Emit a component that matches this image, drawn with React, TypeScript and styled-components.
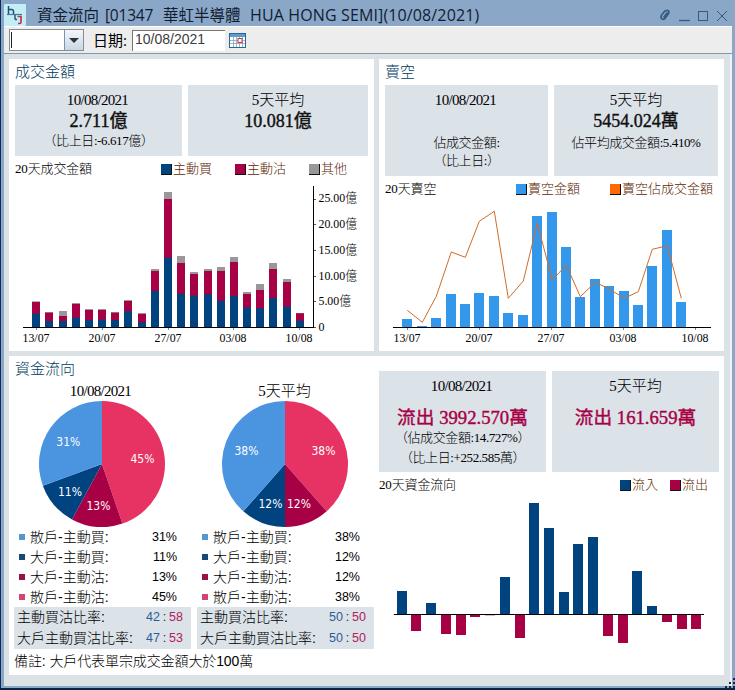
import React from 'react';
import styled, { createGlobalStyle } from 'styled-components';

const SERIF = '"Liberation Serif", "Noto Sans CJK TC", serif';
const SANS = '"Liberation Sans", "Noto Sans CJK TC", sans-serif';
const UI = '"Open Sans", "Noto Sans CJK TC", sans-serif';

const C = {
  navy: '#00437f',
  crimson: '#a80045',
  grey: '#9a979a',
  sky: '#3397ec',
  orange: '#ff6a00',
  pink: '#e63363',
  blue: '#4a94e0',
  card: '#dbe2e8',
};

const Global = createGlobalStyle`
  * { box-sizing: border-box; }
  body { margin: 0; background: #0b2547; overflow: hidden; }
`;

const Frame = styled.div`
  position: relative;
  width: 735px;
  height: 690px;
  display: flex;
  flex-direction: column;
  background: #8ba7c8;
  border-left: 1px solid #0d2b52;
  border-bottom: 2px solid #0a2244;
  font-family: ${SERIF};
  font-weight: 300;
  color: #000;
  white-space: pre;
`;

const TitleBar = styled.header`
  height: 26px;
  flex: none;
  display: flex;
  align-items: center;
  padding: 3px 4px 0 3px;
  font-family: ${UI};
  font-weight: 400;
  color: #101c30;
`;

const TitlePart = styled.span<{ $w: number; $gap: number; $size: number; $ls?: number }>`
  width: ${(p) => p.$w}px;
  margin-left: ${(p) => p.$gap}px;
  font-size: ${(p) => p.$size}px;
  letter-spacing: ${(p) => p.$ls ?? 0}px;
  line-height: 22px;
`;

const WindowButtons = styled.svg`
  margin-left: auto;
  display: block;
`;

const Toolbar = styled.div`
  height: 28px;
  flex: none;
  margin: 0 3px;
  display: flex;
  align-items: center;
  padding-left: 5px;
  background: #ededed;
  border-top: 1px solid #fff;
  border-bottom: 1px solid #8796a6;
`;

const Combo = styled.div`
  width: 75px;
  height: 22px;
  display: flex;
  border: 1px solid #858d96;
  background: #fff;
`;

const Caret = styled.span`
  width: 1px;
  margin: 2px 0 2px 1px;
  background: #222;
`;

const ComboArrow = styled.div`
  width: 19px;
  margin-left: auto;
  display: flex;
  align-items: center;
  justify-content: center;
  border-left: 1px solid #7d93ad;
  background: linear-gradient(#f3f6fa, #c8d7e6);
`;

const DateLabel = styled.label`
  margin-left: 9px;
  width: 39px;
  font: 400 15px/22px ${UI};
`;

const DateInput = styled.div`
  width: 93px;
  height: 21px;
  padding-left: 2px;
  border-top: 1px solid #777;
  border-left: 1px solid #777;
  background: #fff;
  color: #3d3d3d;
  font: 400 14px/17px ${SANS};
`;

const CalendarIcon = styled.svg`
  margin-left: 4px;
`;

const Content = styled.main`
  height: 632px;
  flex: none;
  margin: 0 3px;
  padding: 5px 7px 0 5px;
  display: grid;
  grid-template-columns: 365px 345px;
  grid-template-rows: 292px 319px;
  gap: 5px;
  background: #dbe2e6;
  border-right: 2px solid #edf2f6;
`;

const Panel = styled.section<{ $wide?: boolean }>`
  background: #fff;
  grid-column: ${(p) => (p.$wide ? '1 / -1' : 'auto')};
  display: flex;
  flex-direction: ${(p) => (p.$wide ? 'row' : 'column')};
`;

const PanelTitle = styled.h2`
  margin: 0;
  height: 26px;
  padding-left: 6px;
  font: 300 15px/25px ${SANS};
  color: #003a60;
`;

const Cards = styled.div<{ $h: number; $cols: string }>`
  display: grid;
  grid-template-columns: ${(p) => p.$cols};
  gap: 6px;
  height: ${(p) => p.$h}px;
  margin-left: 6px;
`;

const Card = styled.div`
  background: ${C.card};
  display: flex;
  flex-direction: column;
  align-items: center;
  padding-top: 5px;
`;

const CardHead = styled.div<{ $date?: boolean }>`
  height: 21px;
  font-size: 15px;
  line-height: 21px;
  letter-spacing: ${(p) => (p.$date ? -0.7 : 0)}px;
  margin-left: ${(p) => (p.$date ? -2 : 0)}px;
`;

const CardValue = styled.div<{ $flow?: boolean }>`
  height: 21px;
  margin-top: ${(p) => (p.$flow ? 10 : 0)}px;
  font-size: ${(p) => (p.$flow ? 18.7 : 18)}px;
  font-weight: 400;
  line-height: 21px;
  color: ${(p) => (p.$flow ? C.crimson : '#111')};
  -webkit-text-stroke: 0.4px currentColor;
`;

const CardNote = styled.div<{ $h?: number }>`
  height: ${(p) => p.$h ?? 18}px;
  font-size: 13px;
  line-height: ${(p) => p.$h ?? 18}px;
  letter-spacing: -0.4px;
`;

const LegendRow = styled.div<{ $pad: number }>`
  display: flex;
  align-items: center;
  height: 26px;
  padding: 0 ${(p) => p.$pad}px 0 6px;
  font-size: 13px;
  line-height: 26px;
`;

const LegendName = styled.span`
  margin-right: auto;
  letter-spacing: -0.15px;
`;

const LegendItem = styled.span<{ $gap: number }>`
  display: flex;
  align-items: center;
  margin-left: ${(p) => p.$gap}px;
  color: #5c2600;
`;

const Swatch = styled.i<{ $c: string }>`
  width: 11px;
  height: 11px;
  margin-right: 1px;
  background: ${(p) => p.$c};
  border: solid #111;
  border-width: 0 1px 1px 0;
`;

const Chart = styled.svg<{ $indent?: number }>`
  display: block;
  margin-left: ${(p) => p.$indent ?? 0}px;
  text {
    font-family: ${SERIF};
    font-size: 13px;
    fill: #000;
  }
`;

const LeftColumn = styled.div`
  width: 365px;
`;

const RightColumn = styled.div`
  width: 350px;
  padding-top: 15px;
  margin-left: -1px;
`;

const PieColumns = styled.div`
  display: grid;
  grid-template-columns: 177px 177px;
  gap: 6px;
  margin-left: 5px;
`;

const PieHead = styled.div<{ $date?: boolean }>`
  height: 18px;
  text-align: center;
  font-size: 15px;
  line-height: 19px;
  letter-spacing: ${(p) => (p.$date ? -0.7 : 0)}px;
  padding-right: ${(p) => (p.$date ? 4 : 2)}px;
`;

const Pie = styled.svg`
  display: block;
  text {
    font-family: "DejaVu Sans", sans-serif;
    font-weight: 400;
    font-size: 11.5px;
    fill: #fff;
    text-anchor: middle;
  }
`;

const PieRow = styled.div`
  display: flex;
  align-items: center;
  height: 20px;
  padding: 0 14px 0 5px;
  font: 300 14px/20px ${SANS};
`;

const Dot = styled.i<{ $c: string }>`
  width: 6px;
  height: 6px;
  margin-right: 5px;
  background: ${(p) => p.$c};
`;

const Percent = styled.span`
  margin-left: auto;
  font-size: 12.5px;
`;

const RatioBox = styled.div`
  height: 42px;
  background: ${C.card};
`;

const RatioRow = styled.div`
  display: flex;
  height: 21px;
  padding: 0 8px 0 3px;
  font: 300 14px/21px ${SANS};
`;

const Ratio = styled.span<{ $c?: string }>`
  font-size: 12.5px;
  width: ${(p) => (p.$c ? 14 : 9)}px;
  text-align: center;
  color: ${(p) => p.$c ?? '#222'};
  &:first-of-type { margin-left: auto; }
`;

const Remark = styled.div`
  height: 25px;
  padding-left: 5px;
  letter-spacing: -0.1px;
  font: 300 14px/25px ${SANS};
`;

const ResizeGrip = styled.svg`
  position: absolute;
  right: 0;
  bottom: -1px;
`;

/* x, total height, height up to sell, height up to buy */
const turnover = [
  [32, 25.7, 25, 13.3], [45, 15, 14.3, 6], [59, 16, 11, 6], [72, 24, 23, 9.3],
  [85, 18, 17, 7], [98, 18, 17, 7.3], [111, 15, 14.3, 7], [124, 27, 26, 15.7],
  [138, 14, 13, 4.7], [151, 58, 56, 36], [164, 135, 128, 69.3], [177, 71, 64, 33.3],
  [190, 55, 53, 31.3], [204, 58, 56, 32.7], [217, 60, 56, 26.3], [230, 70, 65, 31],
  [243, 35, 33, 19.7], [256, 43, 37, 18.7], [269, 64, 58, 29], [283, 48, 45, 20.3],
  [296, 14, 13.7, 6.3],
];

/* x, bar height, ratio line y */
const shorts = [
  [402, 8, 310.3], [417, 1, 322.3], [431, 9, 296.3], [446, 33, 252], [460, 23, 257.3],
  [474, 34, 221.3], [489, 31, 211.3], [503, 14, 298.3], [518, 12, 281], [532, 111, 223.3],
  [547, 115, 280], [561, 80, 265], [575, 30, 296.7], [590, 48, 282.3], [604, 41, 289],
  [619, 36, 298.3], [633, 22, 291.7], [647, 61, 249.3], [662, 97, 245.7], [676, 25, 298.3],
];

const flows = [
  [397, 23], [411, -16], [426, 11], [441, -19], [456, -20], [470, -2], [485, -0.3],
  [500, 37], [515, -23], [529, 111], [544, 86], [559, 22], [573, 70], [588, 77],
  [603, -21], [618, -28], [632, 43], [647, 8], [662, -7], [677, -14], [691, -14],
];

const BASE = 327;
const dates = ['13/07', '20/07', '27/07', '03/08', '10/08'];

function DateAxis({ xs }: { xs: number[] }) {
  return (
    <>
      {dates.map((d, i) => (
        <g key={d}>
          <rect x={xs[i]} y={BASE + 1} width={1} height={2} fill="#5e8eb8" />
          <text x={xs[i] - 13.5} y={341.5} textLength={27} lengthAdjust="spacingAndGlyphs">{d}</text>
        </g>
      ))}
    </>
  );
}

function TurnoverChart() {
  return (
    <Chart width="365" height="168" viewBox="9 182 365 168">
      {turnover.map(([x, total, sell, buy]) => (
        <g key={x}>
          <rect x={x} y={BASE - total} width={8} height={total} fill={C.grey} />
          <rect x={x} y={BASE - sell} width={8} height={sell} fill={C.crimson} />
          <rect x={x} y={BASE - buy} width={8} height={buy} fill={C.navy} />
        </g>
      ))}
      <rect x={23} y={BASE} width={291} height={1} fill="#000" />
      <rect x={313} y={186} width={1} height={142} fill="#000" />
      {['0', '5.00億', '10.00億', '15.00億', '20.00億', '25.00億'].map((t, i) => (
        <g key={t}>
          <rect x={314} y={Math.round(BASE - i * 25.7)} width={2} height={1} fill="#555" />
          <text
            x={318.5}
            y={331 - i * 25.75}
            textLength={i === 0 ? 6 : i === 1 ? 32.5 : 38.5}
            lengthAdjust="spacingAndGlyphs"
          >
            {t}
          </text>
        </g>
      ))}
      <DateAxis xs={[36, 102, 168, 233, 299]} />
    </Chart>
  );
}

function ShortChart() {
  return (
    <Chart width="345" height="149" viewBox="379 202 345 149">
      {shorts.map(([x, h]) => (
        <rect key={x} x={x} y={BASE - h} width={10} height={h} fill={C.sky} />
      ))}
      <polyline
        points={shorts.map(([x, , y]) => `${x + 5.3},${y}`).join(' ')}
        fill="none"
        stroke="#d06c28"
        strokeWidth={1}
      />
      <rect x={393} y={BASE} width={318} height={1} fill="#000" />
      <DateAxis xs={[407, 479, 551, 623, 695]} />
    </Chart>
  );
}

function FlowChart() {
  return (
    <Chart $indent={6} width="340" height="160" viewBox="379 498 340 160">
      {flows.map(([x, h]) => (
        <rect
          key={x}
          x={x}
          y={h > 0 ? 614 - h : 615}
          width={10}
          height={Math.abs(h)}
          fill={h > 0 ? C.navy : C.crimson}
        />
      ))}
      <rect x={394} y={614} width={310} height={1} fill="#000" />
    </Chart>
  );
}

type Label = [string, number, number];

function PieChart({ cx, stops, labels }: { cx: number; stops: number[]; labels: Label[] }) {
  const colors = [C.pink, C.crimson, C.navy, C.blue];
  const at = (f: number) => {
    const a = f * Math.PI * 2;
    return `${cx + 63 * Math.sin(a)} ${66 - 63 * Math.cos(a)}`;
  };
  return (
    <Pie width="177" height="127" viewBox="0 2 177 127">
      {colors.map((c, i) => (
        <path key={c} fill={c} d={`M${cx} 66L${at(stops[i])}A63 63 0 0 1 ${at(stops[i + 1])}Z`} />
      ))}
      {labels.map(([t, x, y]) => (
        <text key={`${x}`} x={x} y={y} textLength={24} lengthAdjust="spacingAndGlyphs">{t}</text>
      ))}
    </Pie>
  );
}

function PieDetails({ pct, ratios }: { pct: string[]; ratios: string[][] }) {
  const rows: [string, string][] = [
    ['散戶-主動買:', '#5795cd'],
    ['大戶-主動買:', '#124a7a'],
    ['大戶-主動沽:', '#98124a'],
    ['散戶-主動沽:', '#d24472'],
  ];
  return (
    <>
      {rows.map(([name, c], i) => (
        <PieRow key={name}>
          <Dot $c={c} />
          {name}
          <Percent>{pct[i]}</Percent>
        </PieRow>
      ))}
      <RatioBox>
        {['主動買沽比率:', '大戶主動買沽比率:'].map((name, i) => (
          <RatioRow key={name}>
            {name}
            <Ratio $c="#2c5c98">{ratios[i][0]}</Ratio>
            <Ratio>:</Ratio>
            <Ratio $c="#b3205c">{ratios[i][1]}</Ratio>
          </RatioRow>
        ))}
      </RatioBox>
    </>
  );
}

function Legend({ name, pad, items }: { name: string; pad: number; items: [string, string, number][] }) {
  return (
    <LegendRow $pad={pad}>
      <LegendName>{name}</LegendName>
      {items.map(([t, c, gap]) => (
        <LegendItem key={t} $gap={gap}>
          <Swatch $c={c} />
          {t}
        </LegendItem>
      ))}
    </LegendRow>
  );
}

function AppIcon() {
  return (
    <svg width="22" height="22" viewBox="0 0 22 22">
      <rect width="22" height="22" rx="1" fill="#c4edf6" />
      <path d="M4.5 2v8.500M4.500 5.500h3q2 0 2 2V10" fill="none" stroke="#1d4f77" strokeWidth="1.5" />
      <path d="M3 10.500h15" stroke="#4c7893" strokeWidth="1.2" />
      <path d="M11 11v4.500M11 15.500h2" fill="none" stroke="#1d4f77" strokeWidth="1.4" />
      <path d="M13.500 12.500h3.500V18q0 1.500-1.500 1.500H14" fill="none" stroke="#c0334f" strokeWidth="1.7" />
    </svg>
  );
}

export default function App() {
  return (
    <>
      <Global />
      <Frame>
        <TitleBar>
          <AppIcon />
          <TitlePart $w={64} $gap={11} $size={15.5}>資金流向</TitlePart>
          <TitlePart $w={52} $gap={4} $size={15.5} $ls={-0.2}>[01347</TitlePart>
          <TitlePart $w={80} $gap={6} $size={15.5}>華虹半導體</TitlePart>
          <TitlePart $w={240} $gap={7} $size={16} $ls={0.13}>HUA HONG SEMI](10/08/2021)</TitlePart>
          <WindowButtons width="72" height="20" viewBox="0 0 72 20" fill="none" stroke="#355b83">
            <path d="M3 14q-2-2 0-4.500l3-3.500q3-1.500 4 .5q0 2-1.500 3.500L6 13.500Q4 15 3 14zM4.500 12.500l4-5" strokeWidth="1.7" />
            <path d="M20 15.500h11" strokeWidth="1.3" />
            <rect x="39.500" y="6.500" width="9" height="9" />
            <path d="M58 6l10 10M68 6l-10 10" />
          </WindowButtons>
        </TitleBar>
        <Toolbar>
          <Combo>
            <Caret />
            <ComboArrow>
              <svg width="10" height="5"><path d="M0 0h10L5 5z" fill="#2e3338" /></svg>
            </ComboArrow>
          </Combo>
          <DateLabel>日期:</DateLabel>
          <DateInput>10/08/2021</DateInput>
          <CalendarIcon width="17" height="15" viewBox="0 0 17 15">
            <rect x=".5" y=".5" width="16" height="14" fill="#fff" stroke="#2b6690" />
            <rect x="1" y="1" width="15" height="3" fill="#5c9bd0" />
            <path d="M1 7.500h15M1 10.500h15M4.500 4v10M7.500 4v10M10.500 4v10M13.500 4v10" stroke="#86a3ba" strokeWidth=".8" />
            <rect x="9" y="5.500" width="4" height="4" fill="#fff" stroke="#c53b45" />
          </CalendarIcon>
        </Toolbar>
        <Content>
          <Panel>
            <PanelTitle>成交金額</PanelTitle>
            <Cards $h={71} $cols="167px 180px">
              <Card>
                <CardHead $date>10/08/2021</CardHead>
                <CardValue>2.711億</CardValue>
                <CardNote>（比上日:-6.617億）</CardNote>
              </Card>
              <Card>
                <CardHead>5天平均</CardHead>
                <CardValue>10.081億</CardValue>
              </Card>
            </Cards>
            <Legend
              name="20天成交金額"
              pad={27}
              items={[['主動買', C.navy, 0], ['主動沽', C.crimson, 23], ['其他', C.grey, 23]]}
            />
            <TurnoverChart />
          </Panel>
          <Panel>
            <PanelTitle>賣空</PanelTitle>
            <Cards $h={91} $cols="163px 164px">
              <Card>
                <CardHead $date>10/08/2021</CardHead>
                <CardValue />
                <CardNote $h={21}>佔成交金額:</CardNote>
                <CardNote $h={16}>（比上日:）</CardNote>
              </Card>
              <Card>
                <CardHead>5天平均</CardHead>
                <CardValue>5454.024萬</CardValue>
                <CardNote $h={21}>佔平均成交金額:5.410%</CardNote>
              </Card>
            </Cards>
            <Legend
              name="20天賣空"
              pad={11}
              items={[['賣空金額', C.sky, 0], ['賣空佔成交金額', C.orange, 30]]}
            />
            <ShortChart />
          </Panel>
          <Panel $wide>
            <LeftColumn>
              <PanelTitle>資金流向</PanelTitle>
              <PieColumns>
                <div>
                  <PieHead $date>10/08/2021</PieHead>
                  <PieChart
                    cx={88}
                    stops={[0, 0.4475, 0.579, 0.694, 1]}
                    labels={[['31%', 54.3, 48], ['45%', 128.5, 65], ['11%', 56, 98], ['13%', 84.5, 112]]}
                  />
                  <PieDetails pct={['31%', '11%', '13%', '45%']} ratios={[['42', '58'], ['47', '53']]} />
                </div>
                <div>
                  <PieHead>5天平均</PieHead>
                  <PieChart
                    cx={88}
                    stops={[0, 0.385, 0.5, 0.615, 1]}
                    labels={[['38%', 49.5, 57], ['38%', 126.5, 57], ['12%', 73.5, 110], ['12%', 102, 110]]}
                  />
                  <PieDetails pct={['38%', '12%', '12%', '38%']} ratios={[['50', '50'], ['50', '50']]} />
                </div>
              </PieColumns>
              <Remark>備註: 大戶代表單宗成交金額大於100萬</Remark>
            </LeftColumn>
            <RightColumn>
              <Cards $h={101} $cols="167px 167px">
                <Card>
                  <CardHead $date>10/08/2021</CardHead>
                  <CardValue $flow>流出 3992.570萬</CardValue>
                  <CardNote $h={20}>（佔成交金額:14.727%）</CardNote>
                  <CardNote $h={20}>（比上日:+252.585萬）</CardNote>
                </Card>
                <Card>
                  <CardHead>5天平均</CardHead>
                  <CardValue $flow>流出 161.659萬</CardValue>
                </Card>
              </Cards>
              <Legend
                name="20天資金流向"
                pad={15}
                items={[['流入', C.navy, 0], ['流出', C.crimson, 12]]}
              />
              <FlowChart />
            </RightColumn>
          </Panel>
        </Content>
        <ResizeGrip width="11" height="11" viewBox="0 0 11 11" fill="#14284a">
          <path d="M9 0h2v2H9zM9 4h2v2H9zM5 4h2v2H5zM9 8h2v2H9zM5 8h2v2H5zM1 8h2v2H1z" />
        </ResizeGrip>
      </Frame>
    </>
  );
}
